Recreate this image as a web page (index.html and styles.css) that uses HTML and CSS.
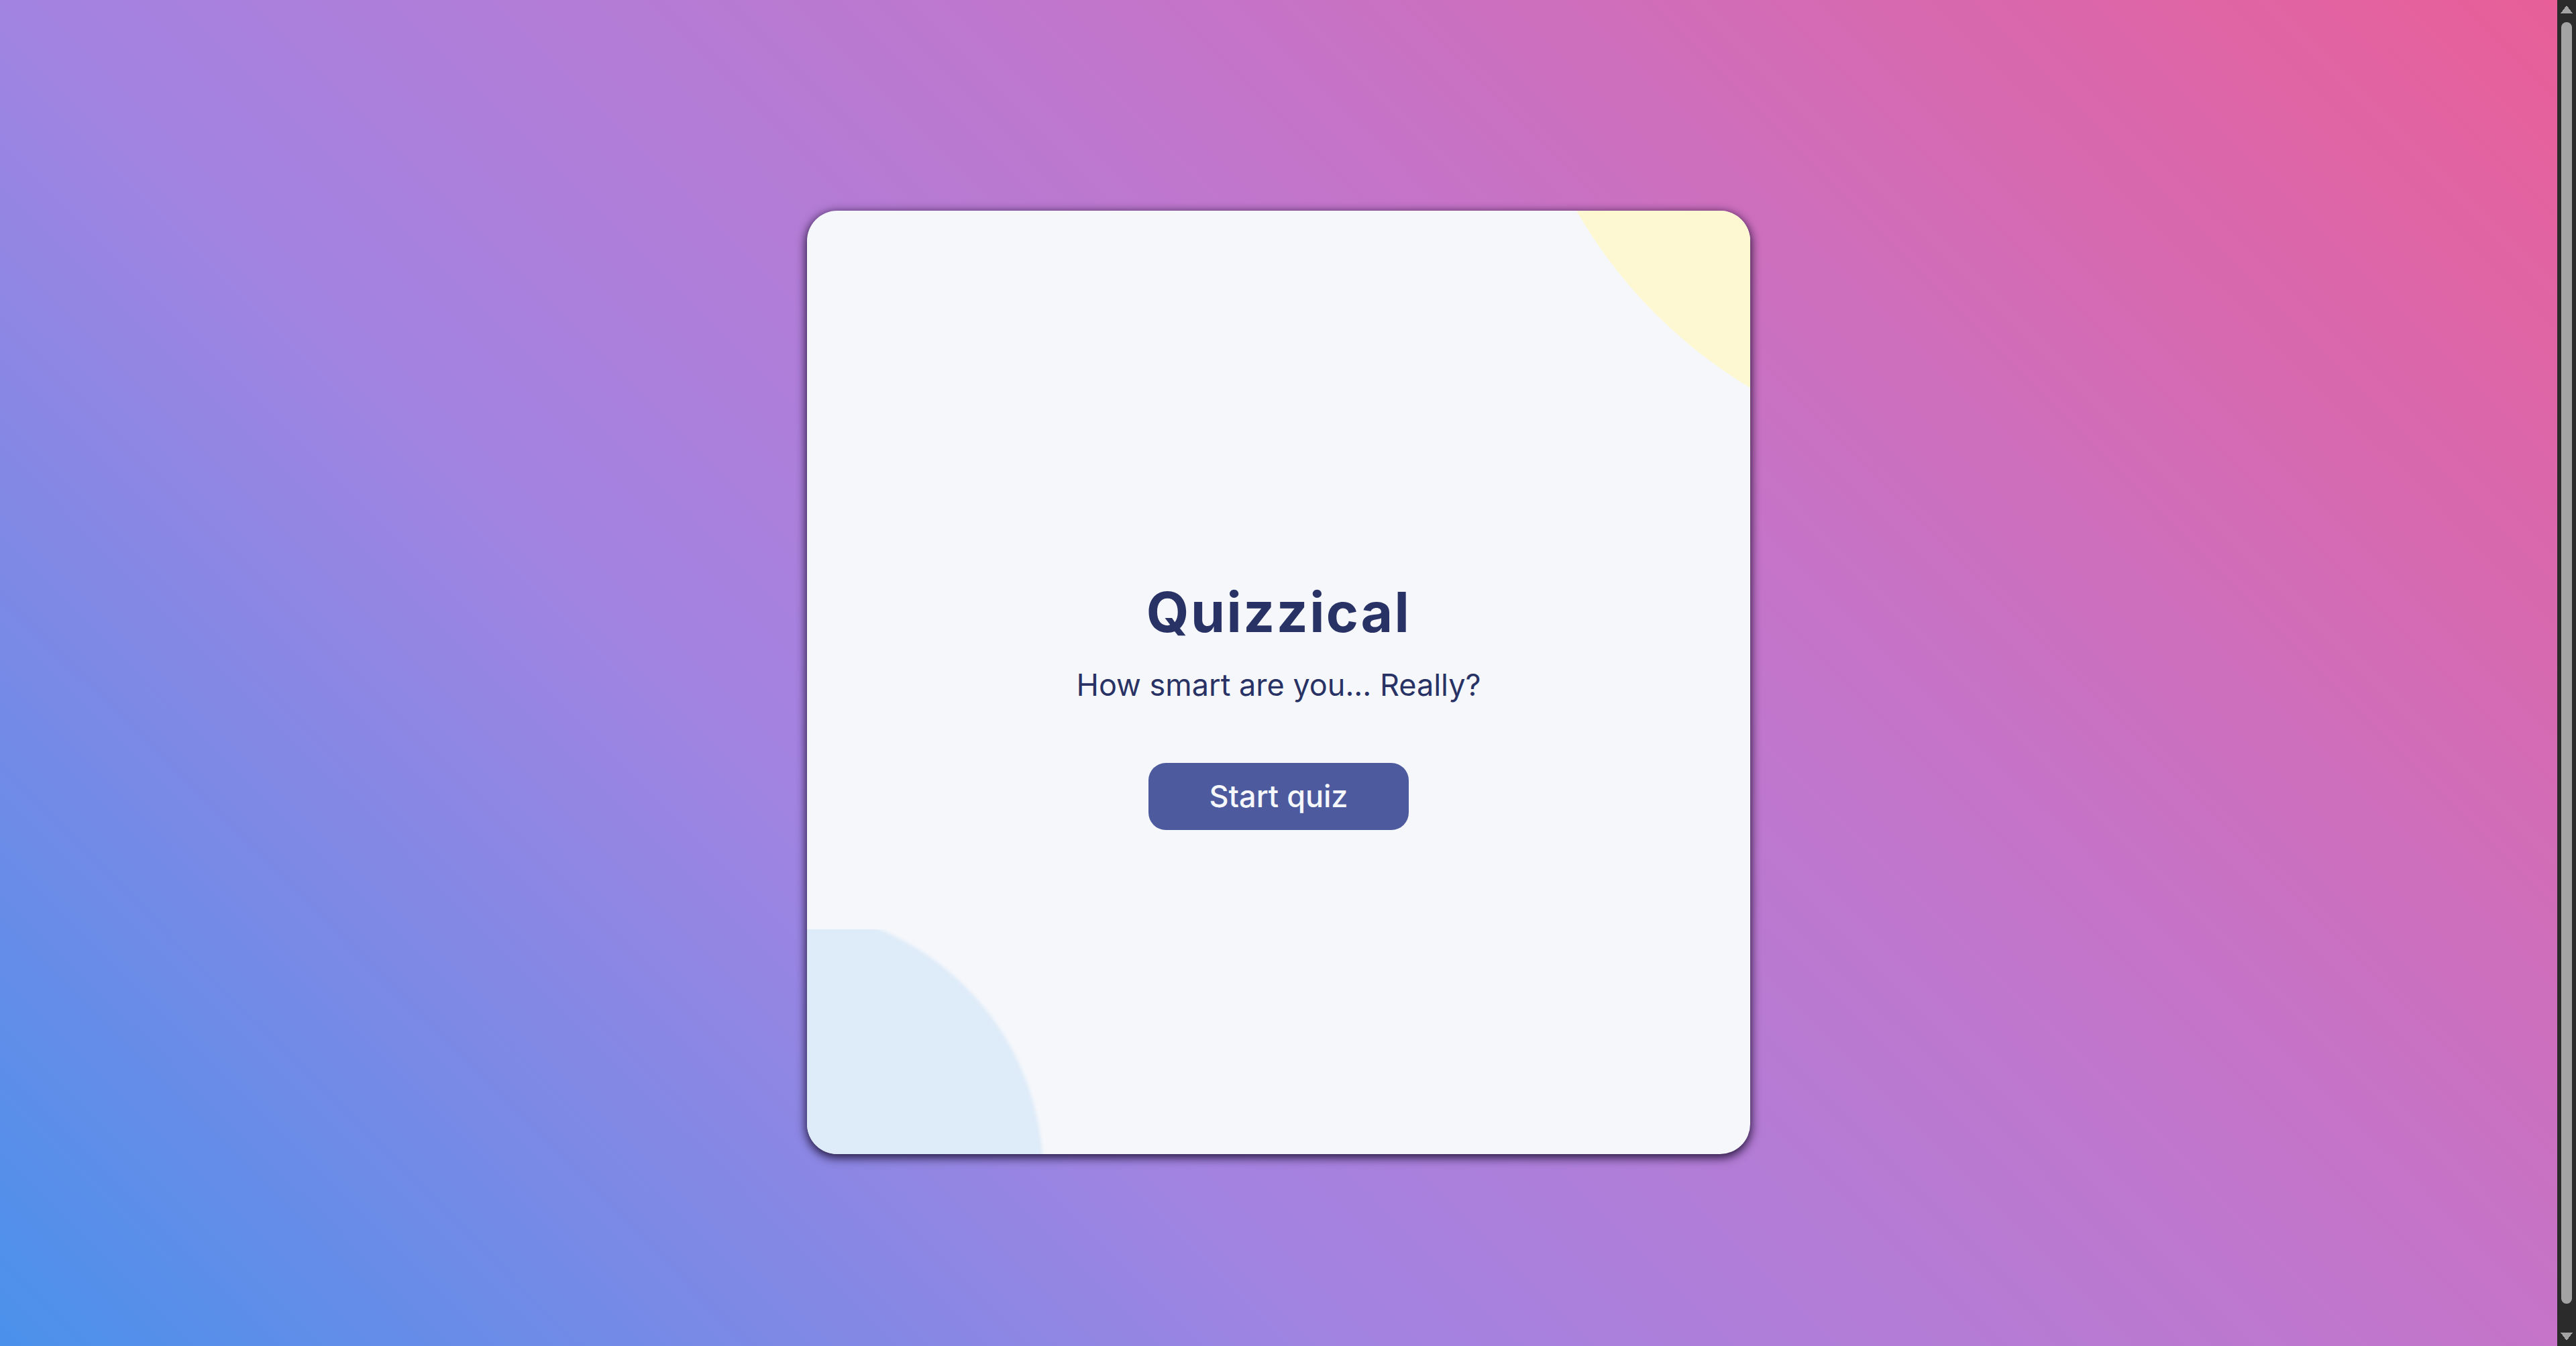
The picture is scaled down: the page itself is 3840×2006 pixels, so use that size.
FILE: index.html
```html
<!DOCTYPE html>
<html lang="en">
<head>
<meta charset="utf-8">
<title>Quizzical</title>
<link rel="stylesheet" href="styles.css">
</head>
<body>
<main class="page">
  <section class="card">
    <div class="blob-yellow"></div>
    <div class="blob-blue-wrap"><div class="blob-blue"></div></div>
    <div class="intro">
      <h1 class="title">Quizzical</h1>
      <p class="subtitle">How smart are you... Really?</p>
      <button class="start-btn" type="button">Start quiz</button>
    </div>
  </section>
</main>
<div class="scrollbar" aria-hidden="true">
  <span class="sb-arrow sb-up"></span>
  <span class="sb-thumb"></span>
  <span class="sb-arrow sb-down"></span>
</div>
</body>
</html>
```
FILE: styles.css
```css
html, body {
  margin: 0;
  padding: 0;
}

body {
  font-family: Inter, "Noto Sans", "Liberation Sans", sans-serif;
  background: #b07cd6;
  padding-right: 28px;
}

.page {
  min-height: 100vh;
  box-sizing: border-box;
  padding-top: 28px;
  display: flex;
  align-items: center;
  justify-content: center;
  background: linear-gradient(45deg, #4a91eb 0%, #a383e1 35%, #c474c9 65%, #e85f98 100%);
}

.card {
  position: relative;
  width: 1406px;
  height: 1406px;
  box-sizing: border-box;
  padding-top: 65px;
  border-radius: 45px;
  overflow: hidden;
  background: #f5f7fb;
  box-shadow: 0 4px 14px 2px rgba(15, 5, 35, 0.8);
  display: flex;
  flex-direction: column;
  align-items: center;
  justify-content: center;
}

.blob-yellow {
  position: absolute;
  left: 1049px;
  top: -1103px;
  width: 1472px;
  height: 1472px;
  border-radius: 50%;
  background: #fef8d2;
}

.blob-blue-wrap {
  position: absolute;
  left: 0;
  bottom: 0;
  width: 360px;
  height: 335px;
  overflow: hidden;
}

.blob-blue {
  position: absolute;
  left: -438px;
  top: -30px;
  width: 790px;
  height: 790px;
  border-radius: 50%;
  background: #deebf8;
  filter: blur(2px);
}

.intro {
  position: relative;
  z-index: 1;
  display: flex;
  flex-direction: column;
  align-items: center;
  color: #293264;
}

.title {
  margin: 0;
  font-size: 82px;
  font-weight: 700;
  letter-spacing: 2.5px;
  line-height: normal;
}

.subtitle {
  margin: 31px 0 0;
  font-size: 45px;
  font-weight: 400;
  line-height: normal;
}

.start-btn {
  margin-top: 89px;
  height: 100px;
  padding: 0 90px;
  border: none;
  border-radius: 26px;
  background: #4d5b9e;
  color: #f5f7fb;
  font-family: Inter, "Noto Sans", "Liberation Sans", sans-serif;
  font-size: 45px;
  font-weight: 500;
}

.scrollbar {
  position: fixed;
  top: 0;
  right: 0;
  width: 28px;
  height: 100vh;
  background: #2b2b2b;
}

.sb-arrow {
  position: absolute;
  left: 5px;
  width: 18px;
  height: 12px;
}

.sb-up {
  top: 8px;
  background:
    linear-gradient(to bottom right, transparent 50%, #a3a3a3 50%) 0 0 / 9px 12px no-repeat,
    linear-gradient(to bottom left, transparent 50%, #a3a3a3 50%) 9px 0 / 9px 12px no-repeat;
}

.sb-down {
  bottom: 8px;
  background:
    linear-gradient(to top right, transparent 50%, #a3a3a3 50%) 0 0 / 9px 12px no-repeat,
    linear-gradient(to top left, transparent 50%, #a3a3a3 50%) 9px 0 / 9px 12px no-repeat;
}

.sb-thumb {
  position: absolute;
  left: 6px;
  top: 33px;
  bottom: 63px;
  width: 16px;
  border-radius: 8px;
  background: #a3a3a3;
}
```
